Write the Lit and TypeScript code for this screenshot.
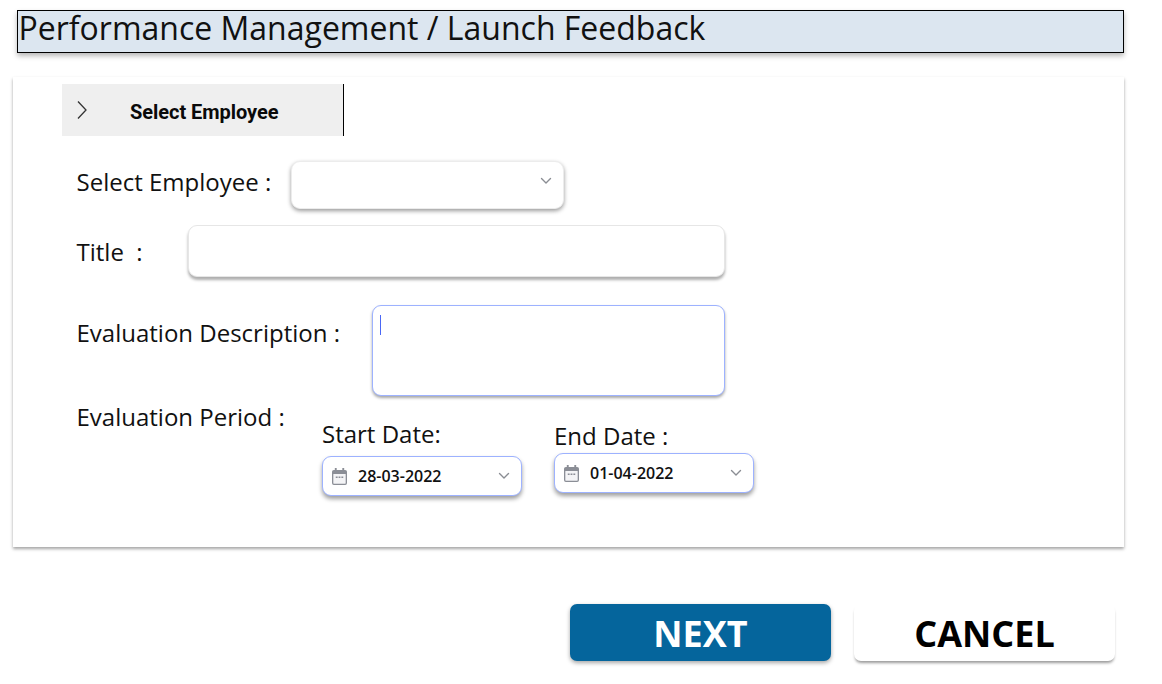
import { LitElement, html, css, svg } from "lit";
import { customElement } from "lit/decorators.js";

const chevron = svg`<svg class="chev" width="12" height="8" viewBox="0 0 12 8" fill="none"><path d="M1.5 1.5 6 6l4.5-4.5" stroke="#8a8d93" stroke-width="1.4" stroke-linecap="round" stroke-linejoin="round"/></svg>`;
const calendar = svg`<svg class="cal" width="15" height="17" viewBox="0 0 16 18"><path fill="#8b8e96" d="M3 0h2v2h6V0h2v2h1a2 2 0 0 1 2 2v12a2 2 0 0 1-2 2H2a2 2 0 0 1-2-2V4a2 2 0 0 1 2-2h1V0Z"/><rect x="1.4" y="6.2" width="13.2" height="10.4" rx=".6" fill="#f4f4f6"/><rect x="4" y="9" width="2" height="1.6" fill="#8b8e96"/><rect x="7" y="9" width="2" height="1.6" fill="#8b8e96"/><rect x="10" y="9" width="2" height="1.6" fill="#8b8e96"/></svg>`;

@customElement("app-root")
export class AppRoot extends LitElement {
  static styles = css`
    :host { display: block; width: 1162px; height: 684px; background: #fff; font-family: "Open Sans", sans-serif; color: #111; overflow: hidden; }
    .page { display: flex; flex-direction: column; padding-top: 10px; }
    .title {
      box-sizing: border-box; margin-left: 17px; width: 1107px; height: 43px; background: #dce6f0;
      border: 1px solid #000; font-size: 32px; line-height: 34px; padding-left: 0.5px; color: #111;
      box-shadow: 0 3px 5px rgba(0,0,0,.28); white-space: nowrap;
    }
    .card {
      box-sizing: border-box; margin: 24px 0 0 13px; width: 1111px; height: 470px; background: #fff;
      box-shadow: 0 2px 3px rgba(0,0,0,.36); padding: 7px 0 0 49px; display: flex; flex-direction: column;
    }
    .tab {
      box-sizing: border-box; width: 282px; height: 52px; background: #efefef; border-right: 1px solid #000;
      display: flex; align-items: center; padding-left: 14px; flex: none;
    }
    .tab svg { flex: none; margin-top: 0; }
    .tab span { margin-left: 40px; font: 700 20px/24px Roboto, sans-serif; color: #0a0a0a; margin-top: 3px; letter-spacing: -.05px; }
    .form { display: flex; flex-direction: column; padding-left: 14.5px; }
    .row { display: flex; align-items: flex-start; }
    label, .lbl { font-size: 24px; line-height: 30px; white-space: pre; color: #111; }
    .r1 { margin-top: 25px; }
    .r1 .lbl { width: 214.5px; margin-top: 6px; }
    .r2 { margin-top: 16px; }
    .r2 .lbl { width: 111.5px; margin-top: 12px; }
    .r3 { margin-top: 28px; }
    .r3 .lbl { width: 295.5px; margin-top: 13px; }
    .r4 { margin-top: 6px; }
    .r4 .lbl { width: 245.5px; margin-top: 0; }
    .box { box-sizing: border-box; background: #fff; border-radius: 9px; flex: none; }
    .select { width: 273px; height: 48px; border: 1px solid #ececec; box-shadow: 0 2px 4px rgba(0,0,0,.4); display: flex; justify-content: flex-end; padding: 15px 11px 0 0; }
    .input { width: 537px; height: 52px; border: 1px solid #e6e6e6; box-shadow: 0 3px 3px rgba(0,0,0,.32); }
    .area { width: 353px; height: 91px; border: 1px solid #9db2ff; box-shadow: 0 2px 3px rgba(0,0,0,.35); padding: 9px 0 0 7px; }
    .caret { width: 1px; height: 20px; background: #4a67f5; }
    .dates { display: flex; align-items: flex-start; gap: 32px; }
    .field { display: flex; flex-direction: column; width: 200px; }
    .field.start { padding-top: 17px; }
    .field.end { padding-top: 19px; }
    .field label { padding-bottom: 7px; }
    .field.end label { padding-bottom: 2px; }
    .date {
      width: 200px; height: 40px; border: 1px solid #9db2ff; box-shadow: 0 3px 4px rgba(0,0,0,.38);
      display: flex; align-items: center; padding: 0 11px 0 9px; font-size: 16px; font-weight: 600; color: #111;
    }
    .date .cal { flex: none; margin-right: 11px; }
    .date .chev { margin-left: auto; }
    .actions { display: flex; gap: 23px; margin: 57px 0 0 570px; }
    .btn {
      box-sizing: border-box; width: 261px; height: 57px; border: 0; border-radius: 7px; font: 700 36px/60px "Open Sans", sans-serif;
      box-shadow: 0 2px 4px rgba(0,0,0,.35); padding: 0; text-align: center;
    }
    .next { background: #05659c; color: #fff; }
    .cancel { background: #fff; color: #000; box-shadow: 0 3px 3px -1px rgba(0,0,0,.4); }
  `;

  render() {
    return html`<div class="page">
      <div class="title">Performance Management / Launch Feedback</div>
      <div class="card">
        <div class="tab">
          <svg width="14" height="20" viewBox="0 0 14 20" fill="none"><path d="M2 1.5 10 10l-8 8.5" stroke="#333" stroke-width="1.3"/></svg>
          <span>Select Employee</span>
        </div>
        <div class="form">
          <div class="row r1"><div class="lbl">Select Employee :</div><div class="box select">${chevron}</div></div>
          <div class="row r2"><div class="lbl">Title  :</div><div class="box input"></div></div>
          <div class="row r3"><div class="lbl">Evaluation Description :</div><div class="box area"><div class="caret"></div></div></div>
          <div class="row r4">
            <div class="lbl">Evaluation Period :</div>
            <div class="dates">
              <div class="field start"><label>Start Date:</label><div class="box date">${calendar}<span>28-03-2022</span>${chevron}</div></div>
              <div class="field end"><label>End Date :</label><div class="box date">${calendar}<span>01-04-2022</span>${chevron}</div></div>
            </div>
          </div>
        </div>
      </div>
      <div class="actions">
        <button class="btn next">NEXT</button>
        <button class="btn cancel">CANCEL</button>
      </div>
    </div>`;
  }
}
